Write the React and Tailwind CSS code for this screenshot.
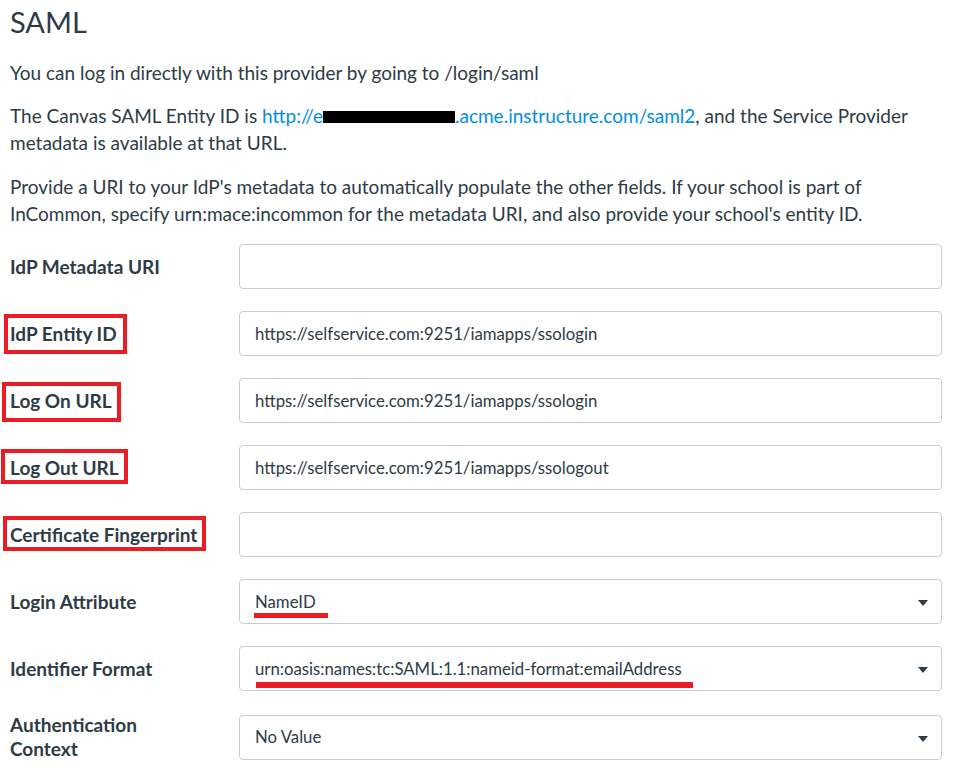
import React from "react";

const fields = [
  { label: "IdP Metadata URI", value: "" },
  {
    label: "IdP Entity ID",
    value: "https://selfservice.com:9251/iamapps/ssologin",
    box: "-left-[6px] -top-[8px] -right-[10px] -bottom-[8px]",
  },
  {
    label: "Log On URL",
    value: "https://selfservice.com:9251/iamapps/ssologin",
    box: "-left-[8px] -top-[7px] -right-[9px] -bottom-[9px]",
  },
  {
    label: "Log Out URL",
    value: "https://selfservice.com:9251/iamapps/ssologout",
    box: "-left-[9px] -top-[7px] -right-[9px] -bottom-[4px]",
  },
  {
    label: "Certificate Fingerprint",
    value: "",
    box: "-left-[7px] -top-[7px] -right-[9px] -bottom-[4px]",
  },
  {
    label: "Login Attribute",
    value: "NameID",
    select: true,
    mark: "left-[14px] top-[33px] w-[74px] h-[5px]",
  },
  {
    label: "Identifier Format",
    value: "urn:oasis:names:tc:SAML:1.1:nameid-format:emailAddress",
    select: true,
    mark: "left-[16px] top-[35px] w-[437px] h-[6px]",
  },
  { label: "Authentication Context", value: "No Value", select: true, twoLine: true },
];

const Caret = () => (
  <svg width="10" height="6" viewBox="0 0 10 6" className="absolute right-[13px] top-[20px]">
    <path d="M0 0 L10 0 L5 6 Z" fill="#2d3b45" />
  </svg>
);

export default function App() {
  return (
    <div
      className="min-h-screen bg-white px-[10px] pt-[4px] text-[#2d3b45]"
      style={{ fontFamily: "Lato, 'Liberation Sans', sans-serif" }}
    >
      <h1 className="text-[29px] leading-[36px] font-normal">SAML</h1>

      <p className="mt-[19px] text-[19px] leading-[27px]">
        You can log in directly with this provider by going to /login/saml
      </p>
      <p className="mt-[16px] text-[19px] leading-[27px]">
        The Canvas SAML Entity ID is{" "}
        <a className="text-[#008ee2]">
          http://e
          <span className="inline-block w-[132px] h-[12px] bg-black align-middle -mt-[2px]" />
          .acme.instructure.com/saml2
        </a>
        , and the Service Provider metadata is available at that URL.
      </p>
      <p className="mt-[17px] text-[19px] leading-[27px] pr-[10px]">
        Provide a URI to your IdP's metadata to automatically populate the other fields. If your school is
        part of InCommon, specify urn:mace:incommon for the metadata URI, and also provide your school's
        entity ID.
      </p>

      <div className="mt-[17px] flex flex-col gap-[22px] pr-[7px]">
        {fields.map((f) => (
          <div key={f.label} className="flex items-center">
            <div className="w-[229px] shrink-0 text-[19px] leading-[24px] font-bold">
              {f.twoLine ? (
                <span>
                  Authentication
                  <br />
                  Context
                </span>
              ) : (
                <span className="relative inline-block">
                  {f.label}
                  {f.box && (
                    <span className={`absolute border-4 border-[#ec1c24] ${f.box}`} />
                  )}
                </span>
              )}
            </div>
            <div className="relative flex-1 h-[45px] rounded-[4px] border border-[#c7cdd1] bg-white flex items-center px-[15px] text-[16.75px]">
              <span className="whitespace-nowrap">{f.value}</span>
              {f.select && <Caret />}
              {f.mark && <span className={`absolute bg-[#ec1c24] ${f.mark}`} />}
            </div>
          </div>
        ))}
      </div>
    </div>
  );
}
